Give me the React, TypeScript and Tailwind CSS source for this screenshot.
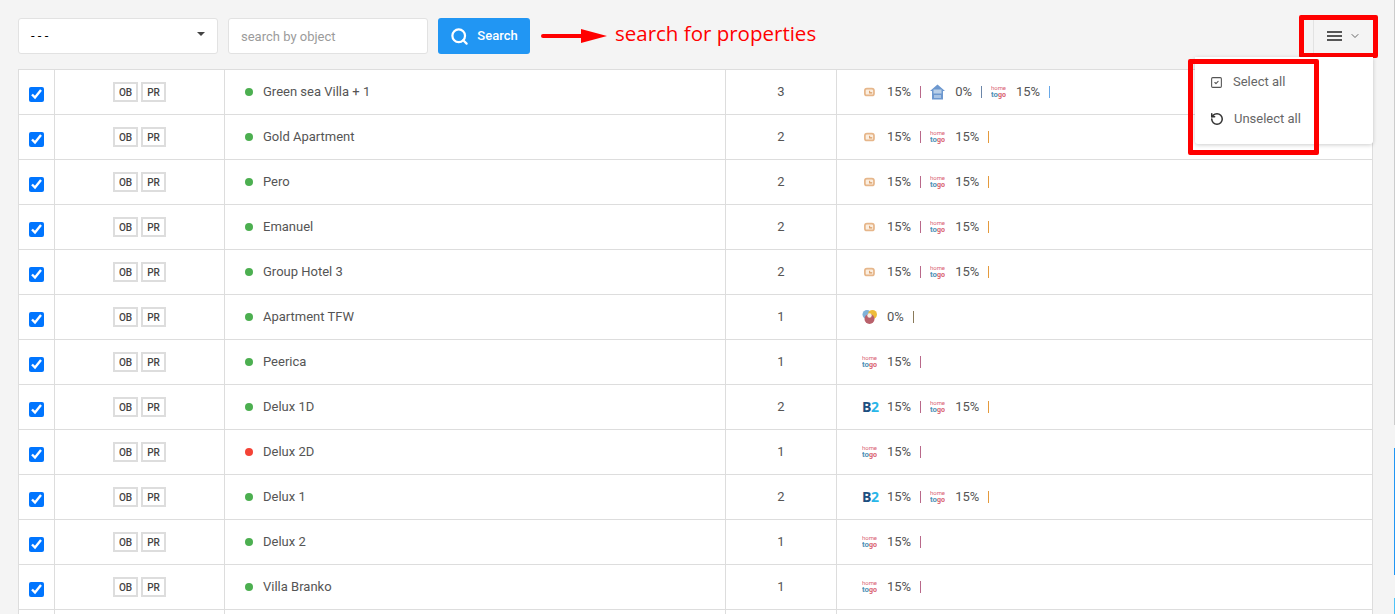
import React from "react";
import { Search, ChevronDown, SquareCheck, RotateCcw } from "lucide-react";

type Channel = "booking" | "house" | "hometogo" | "b2" | "colors";

type Row = {
  name: string;
  count: number;
  active?: boolean;
  channels: { type: Channel; pct: string; sep: string }[];
};

const pair = (sep = "bg-[#e59a3c]"): Row["channels"] => [
  { type: "booking", pct: "15%", sep: "bg-[#b9688a]" },
  { type: "hometogo", pct: "15%", sep },
];

const b2Pair: Row["channels"] = [
  { type: "b2", pct: "15%", sep: "bg-[#b9688a]" },
  { type: "hometogo", pct: "15%", sep: "bg-[#e59a3c]" },
];

const single: Row["channels"] = [{ type: "hometogo", pct: "15%", sep: "bg-[#b9688a]" }];

const rows: Row[] = [
  {
    name: "Green sea Villa + 1",
    count: 3,
    channels: [
      { type: "booking", pct: "15%", sep: "bg-[#b9688a]" },
      { type: "house", pct: "0%", sep: "bg-[#6b86a8]" },
      { type: "hometogo", pct: "15%", sep: "bg-[#68a8e8]" },
    ],
  },
  { name: "Gold Apartment", count: 2, channels: pair() },
  { name: "Pero", count: 2, channels: pair() },
  { name: "Emanuel", count: 2, channels: pair() },
  { name: "Group Hotel 3", count: 2, channels: pair() },
  { name: "Apartment TFW", count: 1, channels: [{ type: "colors", pct: "0%", sep: "bg-[#8a7a5a]" }] },
  { name: "Peerica", count: 1, channels: single },
  { name: "Delux 1D", count: 2, channels: b2Pair },
  { name: "Delux 2D", count: 1, active: false, channels: single },
  { name: "Delux 1", count: 2, channels: b2Pair },
  { name: "Delux 2", count: 1, channels: single },
  { name: "Villa Branko", count: 1, channels: single },
  { name: "", count: 0, channels: [] },
];

const ChannelIcon = ({ type }: { type: Channel }) => {
  if (type === "booking") {
    return (
      <svg width="15" height="12" viewBox="0 0 15 12" className="pl-[2px]">
        <rect x="1" y="2" width="10.5" height="8" rx="2.4" fill="#fbeee0" stroke="#e6b68a" strokeWidth="2" />
        <path d="M6.5 4.5v2.5h3" fill="none" stroke="#d99a60" strokeWidth="1.2" />
      </svg>
    );
  }
  if (type === "house") {
    return (
      <svg width="15" height="16" viewBox="0 0 15 16">
        <path d="M7.5 0.5 15 7h-2v8.5H2V7H0z" fill="#6d98cf" />
        <rect x="3.5" y="5.5" width="8" height="4" fill="#b9cfe8" />
        <rect x="4" y="11" width="7" height="3" fill="#a8c3e3" />
      </svg>
    );
  }
  if (type === "hometogo") {
    return (
      <svg width="15" height="16" viewBox="0 0 15 16">
        <text x="0" y="5.5" fontSize="5.6" textLength="15" lengthAdjust="spacingAndGlyphs" fill="#d9606f" fontFamily="Roboto, sans-serif">
          home
        </text>
        <text x="0" y="13" fontSize="7.5" fontWeight="700" textLength="7" lengthAdjust="spacingAndGlyphs" fill="#4f93b8" fontFamily="Roboto, sans-serif">
          to
        </text>
        <text x="7" y="13" fontSize="7.5" fontWeight="700" textLength="8" lengthAdjust="spacingAndGlyphs" fill="#d9606f" fontFamily="Roboto, sans-serif">
          go
        </text>
      </svg>
    );
  }
  if (type === "b2") {
    return (
      <span className="w-[15px] text-[14px] leading-none font-bold tracking-[-0.5px] font-['Open_Sans',sans-serif]">
        <span className="text-[#1d4f80]">B</span>
        <span className="text-[#29b6e8]">2</span>
      </span>
    );
  }
  return (
    <svg width="15" height="16" viewBox="0 0 15 16">
      <circle cx="5" cy="5.5" r="4.5" fill="#7fb2d8" />
      <circle cx="10.5" cy="5.5" r="4.5" fill="#eebc3a" />
      <circle cx="7.5" cy="10" r="5" fill="#b9616b" />
      <circle cx="7.5" cy="6.5" r="2.2" fill="#f6efe6" />
    </svg>
  );
};

const App = () => {
  return (
    <div className="relative h-[614px] overflow-hidden bg-[#f4f4f4] font-['Roboto',sans-serif] text-[13px] text-[#555]">
      <div className="flex items-start pl-[18px] pr-[22px] pt-[18px]">
        <div className="flex h-9 w-[200px] items-center justify-between rounded-[3px] border border-[#e2e2e2] bg-white pl-3 pr-[12px]">
          <span className="text-black">- - -</span>
          <span className="mb-[5px] h-0 w-0 border-x-[4px] border-t-[4px] border-x-transparent border-t-[#444]" />
        </div>
        <input
          readOnly
          placeholder="search by object"
          className="ml-[10px] h-9 w-[200px] rounded-[3px] border border-[#e2e2e2] bg-white px-3 text-[13px] outline-none placeholder:text-[#9b9b9b]"
        />
        <button className="ml-[10px] flex h-9 w-[92px] items-center justify-center gap-2 rounded-[3px] bg-[#2196f3] text-[13px] font-medium text-white">
          <Search size={19} strokeWidth={2.8} />
          Search
        </button>
        <div className="ml-[11px] flex h-9 items-center">
          <svg width="66" height="18" viewBox="0 0 66 18">
            <path d="M2 9h42" stroke="#f00" strokeWidth="4" strokeLinecap="round" />
            <path d="M40 2l26 7-26 7z" fill="#f00" />
          </svg>
          <span className="ml-2 mb-[5px] font-['Open_Sans',sans-serif] text-[20.5px] leading-none text-[#f00]">
            search for properties
          </span>
        </div>
        <div className="relative ml-auto h-[39px] w-[60px]">
          <div className="flex h-full items-center justify-center gap-[7px] border-l border-[#e2e2e2] pb-1">
            <div className="flex w-[15px] flex-col gap-[2px]">
              <span className="h-[2px] bg-[#555]" />
              <span className="h-[2px] bg-[#555]" />
              <span className="h-[2px] bg-[#555]" />
            </div>
            <ChevronDown size={12} className="text-[#666]" />
          </div>
          <div className="absolute right-0 top-[39px] z-10 h-[87px] w-[178px] rounded-b-[3px] bg-white pl-[15px] pt-[17px] shadow-[0_1px_4px_rgba(0,0,0,0.2)]">
            <div className="flex h-4 items-center text-[13px] text-[#666]">
              <SquareCheck size={13} className="text-[#555]" />
              <span className="ml-[10px]">Select all</span>
            </div>
            <div className="mt-[21px] flex h-4 items-center text-[13px] text-[#666]">
              <RotateCcw size={14} strokeWidth={2.6} className="text-[#333]" />
              <span className="ml-[10px]">Unselect all</span>
            </div>
          </div>
        </div>
      </div>

      <div className="pl-[18px] pr-[22px] pt-[12px]">
        <table className="w-full table-fixed border-collapse border-t border-t-[#bbb] bg-white">
          <colgroup>
            <col className="w-[36px]" />
            <col className="w-[170px]" />
            <col className="w-[501px]" />
            <col className="w-[111px]" />
            <col />
          </colgroup>
          <tbody>
            {rows.map((row, i) => (
              <tr key={i} className="h-[45px] border border-[#ddd]">
                <td className="border-r border-[#ddd] pl-[10px] pt-[5px]">
                  {row.name && <input type="checkbox" checked readOnly className="block h-[15px] w-[15px]" />}
                </td>
                <td className="border-r border-[#ddd]">
                  {row.name && (
                    <div className="flex justify-center gap-[3px]">
                      <span className="flex h-5 w-[25px] items-center justify-center border-2 border-[#ddd] text-[10px] font-medium text-[#444]">
                        OB
                      </span>
                      <span className="flex h-5 w-[25px] items-center justify-center border-2 border-[#ddd] text-[10px] font-medium text-[#444]">
                        PR
                      </span>
                    </div>
                  )}
                </td>
                <td className="border-r border-[#ddd] pl-5">
                  {row.name && (
                    <div className="flex items-center">
                      <span
                        className={
                          row.active === false
                            ? "h-2 w-2 rounded-full bg-[#f44336]"
                            : "h-2 w-2 rounded-full bg-[#4caf50]"
                        }
                      />
                      <span className="ml-[10px] mb-[2px] leading-[15px]">{row.name}</span>
                    </div>
                  )}
                </td>
                <td className="border-r border-[#ddd] text-center">{row.name && row.count}</td>
                <td className="pl-[25px]">
                  <div className="flex items-center">
                    {row.channels.map((c, j) => (
                      <div key={j} className="flex items-center">
                        <span className="flex w-[15px] items-center">
                          <ChannelIcon type={c.type} />
                        </span>
                        <span className="ml-[10px]">{c.pct}</span>
                        <span className={`mx-[9px] h-3 w-px ${c.sep}`} />
                      </div>
                    ))}
                  </div>
                </td>
              </tr>
            ))}
          </tbody>
        </table>
      </div>

      {/* red annotation boxes drawn over the screenshot */}
      <div className="absolute left-[1299px] top-[15px] h-[43px] w-[79px] rounded-[2px] border-[5px] border-[#f00]" />
      <div className="absolute left-[1188px] top-[59px] z-20 h-[96px] w-[131px] rounded-[2px] border-[5px] border-[#f00]" />

      {/* page scrollbar stripes at the edge */}
      <div className="absolute right-0 top-0 h-[425px] w-px bg-[#ccc]" />
      <div className="absolute right-0 top-[448px] h-[127px] w-px bg-[#2196f3]" />
      <div className="absolute right-0 top-[598px] h-4 w-px bg-[#4fc3f7]" />
    </div>
  );
};

export default App;
